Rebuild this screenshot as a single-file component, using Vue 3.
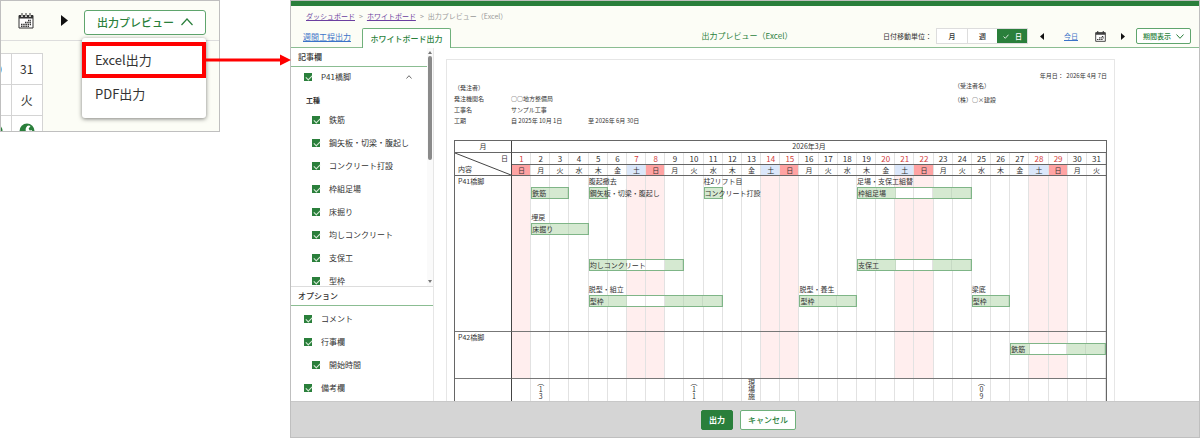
<script setup>
const weekdays = ['日', '月', '火', '水', '木', '金', '土']
const days = Array.from({ length: 31 }, (_, i) => {
  const w = i % 7
  return {
    n: i + 1,
    name: weekdays[w],
    sat: w === 6,
    sun: w === 0,
    off: w === 0 || w === 6,
    holiday: w === 0 || w === 6 || i + 1 === 20
  }
})

const works = ['鉄筋', '鋼矢板・切梁・腹起し', 'コンクリート打設', '枠組足場', '床掘り', '均しコンクリート', '支保工', '型枠']
const options = [
  { label: 'コメント' },
  { label: '行事欄' },
  { label: '開始時間', nested: true },
  { label: '備考欄' }
]

const sections = [
  {
    name: 'P41橋脚',
    size: 'large',
    notes: [
      { day: 5, lane: 0, text: '腹起撤去' },
      { day: 11, lane: 0, text: '柱2リフト目' },
      { day: 19, lane: 0, text: '足場・支保工組替' },
      { day: 2, lane: 3, text: '埋戻' },
      { day: 5, lane: 9, text: '脱型・組立' },
      { day: 16, lane: 9, text: '脱型・養生' },
      { day: 25, lane: 9, text: '梁底' }
    ],
    bars: [
      { day: 2, span: 2, lane: 1, text: '鉄筋' },
      { day: 5, span: 1, lane: 1, text: '鋼矢板・切梁・腹起し' },
      { day: 11, span: 1, lane: 1, text: 'コンクリート打設' },
      { day: 19, span: 6, lane: 1, text: '枠組足場' },
      { day: 2, span: 3, lane: 4, text: '床掘り' },
      { day: 5, span: 5, lane: 7, text: '均しコンクリート' },
      { day: 19, span: 6, lane: 7, text: '支保工' },
      { day: 5, span: 7, lane: 10, text: '型枠' },
      { day: 16, span: 3, lane: 10, text: '型枠' },
      { day: 25, span: 2, lane: 10, text: '型枠' }
    ]
  },
  {
    name: 'P42橋脚',
    size: 'small',
    notes: [],
    bars: [{ day: 27, span: 5, lane: 1, text: '鉄筋' }]
  }
]

const remarks = { 2: '（13', 10: '（11', 13: '現場施', 25: '（09' }
const laneTop = (lane) => ({ top: lane * 12 - 1 + 'px' })
const barStyle = (bar) => ({ top: bar.lane * 12 - 1 + 'px', width: bar.span * 100 + '%' })
</script>

<template>
  <div class="page">
    <section class="card">
      <div class="card-head">
        <button class="icon-btn" aria-label="カレンダー">
          <svg class="cal-lg" viewBox="0 0 16 16">
            <path d="M1 2.500h14V15H1z" fill="#fff" stroke="#333" />
            <path d="M1 2h14v3.500H1z" fill="#333" />
            <path d="M4 0v4M8 0v4M12 0v4" stroke="#fcfdf6" stroke-width="2" />
            <path d="M4 0v3.500M8 0v3.500M12 0v3.500" stroke="#333" />
            <path d="M10 7.500h3M7 9.500h6M3 11.500h10M3 13.300h8" stroke="#333" stroke-width="1.300" stroke-dasharray="1.500 0.700" />
          </svg>
        </button>
        <button class="icon-btn next-lg" aria-label="次へ">
          <svg viewBox="0 0 7 11"><path d="M0 0l7 5.500L0 11z" fill="#111" /></svg>
        </button>
        <button class="preview-btn">
          出力プレビュー
          <svg viewBox="0 0 12 8"><path d="M.5 7L6 1l5.500 6" fill="none" stroke="#2a7f3b" stroke-width="1.200" /></svg>
        </button>
      </div>
      <div class="card-body">
        <table class="mini">
          <tbody>
            <tr><td>30</td><td>31</td></tr>
            <tr><td></td><td>火</td></tr>
            <tr>
              <td v-for="k in 2" :key="k">
                <svg class="badge" viewBox="0 0 16 16">
                  <circle cx="8" cy="8" r="7.500" fill="#2a7f3b" />
                  <path d="M3.800 12.200l4.700-4.700" stroke="#fff" stroke-width="2.200" />
                  <path d="M11.500 3a3.300 3.300 0 1 0 1.700 4l-2.400.4-1.200-1.600z" fill="#fff" />
                </svg>
              </td>
            </tr>
          </tbody>
        </table>
      </div>
      <div class="menu">
        <button class="menu-item picked">Excel出力</button>
        <button class="menu-item">PDF出力</button>
      </div>
    </section>

    <svg class="arrow" viewBox="0 0 86 12">
      <path d="M0 6h76" stroke="#f00" stroke-width="3" />
      <path d="M75 0.500L86 6l-11 5.500z" fill="#f00" />
    </svg>

    <section class="window">
      <header class="head">
        <nav class="crumbs">
          <a href="#">ダッシュボード</a><span>&gt;</span><a href="#">ホワイトボード</a><span>&gt;</span><span class="here">出力プレビュー（Excel）</span>
        </nav>
        <div class="bar-row">
          <div class="tabs">
            <a class="tab" href="#">週間工程出力</a>
            <button class="tab active">ホワイトボード出力</button>
          </div>
          <div class="title">出力プレビュー（Excel）</div>
          <div class="tools">
            <span class="unit">日付移動単位：</span>
            <div class="seg">
              <button>月</button>
              <button>週</button>
              <button class="on">
                <svg viewBox="0 0 6 5"><path d="M.5 2.500l1.800 1.800L5.500.7" fill="none" stroke="#fff" stroke-width=".8" /></svg>日
              </button>
            </div>
            <button class="icon-btn prev" aria-label="前へ">
              <svg class="tri" viewBox="0 0 4 7"><path d="M4 0L0 3.500 4 7z" fill="#111" /></svg>
            </button>
            <a class="today" href="#">今日</a>
            <button class="icon-btn" aria-label="カレンダー">
              <svg class="cal-sm" viewBox="0 0 16 16">
                <path d="M1 2.500h14V15H1z" fill="#fff" stroke="#333" stroke-width="1.300" />
                <path d="M1 2h14v3.500H1z" fill="#444" />
                <path d="M4 0v3.500M12 0v3.500" stroke="#333" stroke-width="1.500" />
                <path d="M10 8h3M6 10h7M3 12.500h9" stroke="#333" stroke-width="1.500" stroke-dasharray="2 1" />
              </svg>
            </button>
            <button class="icon-btn next" aria-label="次へ">
              <svg class="tri" viewBox="0 0 4 7"><path d="M0 0l4 3.500L0 7z" fill="#111" /></svg>
            </button>
            <button class="range">
              期間表示
              <svg viewBox="0 0 8 5"><path d="M.5.5L4 4.300 7.500.5" fill="none" stroke="#2a7f3b" /></svg>
            </button>
          </div>
        </div>
      </header>

      <div class="content">
        <aside class="side">
          <div class="scroll">
            <div class="list">
              <h2>記事欄</h2>
              <div class="row top">
                <label><input type="checkbox" checked />P41橋脚</label>
                <svg class="fold" viewBox="0 0 6 4"><path d="M.5 3.500L3 .7l2.500 2.800" fill="none" stroke="#444" stroke-width=".8" /></svg>
              </div>
              <h3>工種</h3>
              <div v-for="w in works" :key="w" class="row nested">
                <label><input type="checkbox" checked />{{ w }}</label>
              </div>
            </div>
            <div class="track">
              <svg viewBox="0 0 4 3"><path d="M0 3l2-3 2 3z" fill="#777" /></svg>
              <div class="thumb"></div>
              <svg viewBox="0 0 4 3"><path d="M0 0l2 3 2-3z" fill="#777" /></svg>
            </div>
          </div>
          <div class="opts">
            <h2>オプション</h2>
            <div v-for="o in options" :key="o.label" class="row" :class="{ nested: o.nested }">
              <label><input type="checkbox" checked />{{ o.label }}</label>
            </div>
          </div>
        </aside>

        <main class="main">
          <div class="sheet">
            <div class="info">
              <div class="left">
                <div class="line">（発注者）</div>
                <div class="line"><span>発注機関名</span><span>○○地方整備局</span></div>
                <div class="line"><span>工事名</span><span>サンプル工事</span></div>
                <div class="line"><span>工期</span><span>自 2025年 10月 1日</span><span>至 2026年 6月 30日</span></div>
              </div>
              <div class="right">
                <div class="date">年月日：&nbsp; 2026年 4月 7日</div>
                <div>（受注者名）</div>
                <div class="firm">（株）○×建設</div>
              </div>
            </div>

            <table class="chart">
              <thead>
                <tr>
                  <th class="first">月</th>
                  <th class="month">2026年3月</th>
                </tr>
                <tr>
                  <th class="first corner">
                    <svg viewBox="0 0 56 22" preserveAspectRatio="none"><path d="M0 0l56 22" stroke="#444" /></svg>
                    <span class="c-day">日</span>
                    <span class="c-body">内容</span>
                  </th>
                  <th v-for="d in days" :key="d.n" class="num" :class="{ red: d.holiday }">{{ d.n }}</th>
                </tr>
                <tr>
                  <th v-for="d in days" :key="d.n" class="wd" :class="{ sat: d.sat, sun: d.sun }">{{ d.name }}</th>
                </tr>
              </thead>
              <tbody>
                <tr v-for="s in sections" :key="s.name" :class="s.size">
                  <th class="first name">{{ s.name }}</th>
                  <td v-for="d in days" :key="d.n" :class="{ off: d.off }">
                    <span v-for="t in s.notes.filter((x) => x.day === d.n)" :key="t.text" class="note" :style="laneTop(t.lane)">{{ t.text }}</span>
                    <div v-for="b in s.bars.filter((x) => x.day === d.n)" :key="b.lane" class="gantt" :style="barStyle(b)">
                      <i v-for="k in b.span" :key="k" :class="{ blank: days[b.day + k - 2].off }"></i>
                      <span>{{ b.text }}</span>
                    </div>
                  </td>
                </tr>
                <tr class="rest">
                  <th class="first name"></th>
                  <td v-for="d in days" :key="d.n"><span class="vert">{{ remarks[d.n] }}</span></td>
                </tr>
              </tbody>
            </table>
          </div>
        </main>
      </div>

      <footer class="foot">
        <button class="primary">出力</button>
        <button class="cancel">キャンセル</button>
      </footer>
    </section>
  </div>
</template>

<style>
body {
  background: #fff;
}
</style>

<style scoped>
* {
  box-sizing: border-box;
}
.page {
  position: relative;
  display: flex;
  align-items: flex-start;
  gap: 70px;
  height: 100vh;
  overflow: hidden;
  font-family: "Noto Sans CJK JP", "Noto Sans", sans-serif;
  font-size: 8px;
  line-height: 12px;
  color: #333;
}
button {
  font: inherit;
  color: inherit;
  padding: 0;
  margin: 0;
  border: 0;
  background: none;
}
svg {
  display: block;
}
h2, h3 {
  margin: 0;
  font-size: 8px;
  font-weight: 500;
}
table {
  border-spacing: 0;
}

/* menu card */
.card {
  position: relative;
  flex: 0 0 220px;
  height: 132px;
  border: 1px solid #bfbfbf;
  background: #fcfdf6;
}
.card-head {
  display: flex;
  align-items: center;
  height: 40px;
  padding: 0 13px 0 17px;
  border-bottom: 1px solid #ddd;
}
.cal-lg {
  width: 16px;
  height: 16px;
}
.next-lg {
  margin-left: 27px;
}
.next-lg svg {
  width: 7px;
  height: 11px;
}
.preview-btn {
  display: flex;
  align-items: center;
  justify-content: center;
  gap: 7px;
  width: 122px;
  height: 25px;
  margin-left: auto;
  margin-top: 3px;
  border: 1px solid #5fa56d;
  border-radius: 3px;
  background: #fff;
  color: #2a7f3b;
  font-size: 11px;
  font-weight: 500;
}
.preview-btn svg {
  width: 12px;
  height: 8px;
}
.card-body {
  height: 90px;
  padding-top: 12px;
  overflow: hidden;
}
.mini {
  margin-left: -21px;
  table-layout: fixed;
  width: 63px;
  border-top: 1px solid #d4d4d4;
  font-size: 12px;
}
.mini td {
  height: 31px;
  padding: 0;
  border-right: 1px solid #d4d4d4;
  border-bottom: 1px solid #d4d4d4;
  background: #fff;
  text-align: center;
}
.badge {
  width: 16px;
  height: 16px;
  margin: 0 auto;
}
.menu {
  position: absolute;
  top: 37px;
  left: 81px;
  width: 124px;
  padding: 4px 0 8px;
  border-radius: 3px;
  background: #fff;
  box-shadow: 0 1px 4px rgba(0, 0, 0, 0.5);
}
.menu-item {
  display: block;
  width: 100%;
  height: 32px;
  padding-left: 13px;
  text-align: left;
  font-size: 13px;
  line-height: 18px;
}
.menu-item.picked {
  height: 36px;
  padding-left: 9px;
  border: 4px solid #f00;
}
.arrow {
  position: absolute;
  top: 54px;
  left: 205px;
  width: 86px;
  height: 12px;
  z-index: 3;
}

/* preview window */
.window {
  flex: 1;
  min-width: 0;
  height: 100%;
  display: flex;
  flex-direction: column;
  border: 1px solid #bfbfbf;
  background: #fff;
}
.head {
  border-top: 5px solid #2a7f3b;
  border-bottom: 1px solid #8bbd92;
  background: #fcfdf6;
}
.crumbs {
  display: flex;
  gap: 4px;
  height: 22px;
  padding: 4px 0 0 15px;
  font-size: 7px;
  color: #999;
}
.crumbs a {
  color: #6b3fa0;
}
.bar-row {
  display: grid;
  grid-template-columns: 1fr auto 1fr;
  align-items: start;
  height: 19px;
}
.tabs {
  display: flex;
}
.tab {
  height: 20px;
  line-height: 18px;
  color: #3b73c8;
}
a.tab {
  width: 71px;
  padding-left: 12px;
}
.tab.active {
  width: 89px;
  border: 1px solid #6fb07b;
  border-bottom: 0;
  border-radius: 2px 2px 0 0;
  background: #fff;
  color: #2a7f3b;
  font-weight: 500;
}
.title {
  padding-left: 4px;
  line-height: 16px;
  color: #2a7f3b;
}
.tools {
  display: flex;
  align-items: center;
  justify-content: flex-end;
  height: 16px;
  padding-right: 8px;
  font-size: 7px;
}
.seg {
  display: flex;
  margin: 0 12px 0 4px;
  border: 1px solid #ddd;
}
.seg button {
  display: flex;
  align-items: center;
  justify-content: center;
  width: 30px;
  height: 14px;
  background: #fff;
  font-weight: 500;
}
.seg button + button {
  border-left: 1px solid #ddd;
}
.seg button.on {
  gap: 6px;
  border-color: #2a7f3b;
  background: #2a7f3b;
  color: #fff;
}
.seg svg {
  width: 6px;
  height: 5px;
}
.tri {
  width: 4px;
  height: 7px;
}
.today {
  margin: 0 17px 0 20px;
  color: #3b73c8;
}
.cal-sm {
  width: 11px;
  height: 11px;
}
.next {
  margin: 0 11px 0 15px;
}
.range {
  display: flex;
  align-items: center;
  justify-content: center;
  gap: 5px;
  width: 55px;
  height: 16px;
  border: 1px solid #5fa56d;
  border-radius: 2px;
  background: #fff;
  color: #2a7f3b;
  font-weight: 500;
}
.range svg {
  width: 8px;
  height: 5px;
}

.content {
  flex: 1;
  display: flex;
  min-height: 0;
}
.side {
  flex: 0 0 143px;
  display: flex;
  flex-direction: column;
  border-right: 1px solid #e6e6e6;
}
.scroll {
  flex: 1;
  display: flex;
  min-height: 0;
}
.list {
  flex: 1;
  overflow: hidden;
}
.side h2 {
  height: 19px;
  padding-left: 7px;
  line-height: 18px;
  border-bottom: 1px solid #8bbd92;
}
.side h3 {
  height: 21px;
  padding: 7px 0 0 15px;
  font-weight: 700;
  font-size: 7px;
}
.row {
  display: flex;
  align-items: center;
  justify-content: space-between;
  height: 23px;
  padding-left: 13px;
}
.row.top {
  height: 20px;
  padding-right: 15px;
}
.row.nested {
  padding-left: 21px;
}
.row label {
  display: flex;
  align-items: center;
  gap: 9px;
}
.fold {
  width: 6px;
  height: 4px;
}
input {
  appearance: none;
  position: relative;
  width: 8px;
  height: 8px;
  margin: 0;
  background: #2a7f3b;
}
input:checked::after {
  content: "";
  position: absolute;
  top: 2px;
  left: 2px;
  width: 5px;
  height: 3px;
  border-left: 1px solid #d9ecd9;
  border-bottom: 1px solid #d9ecd9;
  transform: rotate(-45deg);
}
.track {
  display: flex;
  flex-direction: column;
  align-items: center;
  width: 6px;
  padding: 3px 0;
  background: #fafafa;
}
.track svg {
  width: 4px;
  height: 3px;
}
.thumb {
  width: 4px;
  height: 104px;
  margin: 2px 0 auto;
  border-radius: 2px;
  background: #8a8a8a;
}
.opts {
  padding-bottom: 2px;
  border-top: 1px solid #ddd;
}
.opts h2 {
  margin-bottom: 1px;
}

.main {
  flex: 1;
  min-width: 0;
  padding: 11px 12px 0;
  overflow: hidden;
}
.sheet {
  display: flex;
  flex-direction: column;
  min-height: 100%;
  max-width: 669px;
  padding: 0 7px;
  border: 1px solid #e6e6e6;
  border-bottom: 0;
}
.info {
  display: flex;
  justify-content: space-between;
  height: 80px;
  font-size: 6px;
  line-height: 11px;
}
.left {
  padding-top: 22px;
}
.line {
  display: grid;
  grid-template-columns: 57px 77px auto;
  white-space: nowrap;
}
.right {
  width: 153px;
  padding-top: 12px;
}
.date {
  text-align: right;
  line-height: 8px;
}
.firm {
  margin-top: 3px;
}

.chart {
  display: block;
  flex: 1;
  border: 1px solid #666;
  border-bottom: 0;
  font-size: 7px;
}
.chart th {
  padding: 0;
  font-weight: 400;
}
.chart tbody {
  display: block;
}
.chart thead,
.chart tbody tr {
  display: grid;
  grid-template-columns: 57px repeat(31, minmax(0, 1fr));
}
.chart thead {
  grid-template-rows: 12px 12px 11px;
  line-height: 11px;
}
.chart thead tr {
  display: contents;
}
.chart thead th {
  border-bottom: 1px solid #666;
}
.first {
  border-right: 1px solid #444;
}
.month {
  grid-column: 2 / -1;
}
.corner {
  grid-row: 2 / 4;
  position: relative;
  display: flex;
  flex-direction: column;
  justify-content: space-between;
}
.corner svg {
  position: absolute;
  width: 100%;
  height: 100%;
}
.c-day {
  padding-right: 3px;
  text-align: right;
}
.c-body {
  padding-left: 3px;
  text-align: left;
}
.num,
.wd {
  box-shadow: inset -1px 0 #e2e2e2;
}
.chart .num {
  font-size: 8px;
}
.chart .wd {
  line-height: 10px;
}
.red {
  color: #d23c3c;
}
.wd.sat {
  background: #dbe7fa;
}
.wd.sun {
  background: #ffa3a3;
}
.chart .name {
  padding-left: 3px;
  line-height: 11px;
  text-align: left;
}
.large {
  height: 156px;
}
.small {
  height: 47px;
}
.rest {
  height: 60px;
}
.large > *,
.small > * {
  border-bottom: 1px solid #777;
}
.chart td {
  position: relative;
  padding: 0;
  box-shadow: inset -1px 0 #e2e2e2;
}
.chart td.off {
  background: #ffeeee;
}
.note {
  position: absolute;
  left: 0;
  z-index: 1;
  white-space: nowrap;
}
.gantt {
  position: absolute;
  left: 0;
  z-index: 1;
  display: flex;
  height: 12px;
  border: 1px solid #7fb587;
}
.gantt i {
  flex: 1;
  background: #d5e9d1;
  box-shadow: inset -1px 0 #c6dac4;
}
.gantt i.blank {
  background: #fff;
  box-shadow: inset -1px 0 #e2e2e2;
}
.gantt span {
  position: absolute;
  top: 0;
  left: 0;
  line-height: 11px;
  white-space: nowrap;
}
.vert {
  display: block;
  margin: 0 auto;
  width: 12px;
  writing-mode: vertical-rl;
  text-orientation: upright;
}

.foot {
  display: flex;
  align-items: center;
  justify-content: center;
  gap: 7px;
  height: 36px;
  padding-left: 7px;
  border-top: 1px solid #c8c8c8;
  background: #d5d5d5;
  font-weight: 500;
}
.foot button {
  height: 20px;
  border: 1px solid #2a7f3b;
  border-radius: 2px;
}
.primary {
  width: 32px;
  background: #2a7f3b;
  color: #fff;
  font-weight: 700;
}
.foot .cancel {
  width: 56px;
  border-color: #6fb07b;
  background: #fff;
  color: #2a7f3b;
}
</style>
